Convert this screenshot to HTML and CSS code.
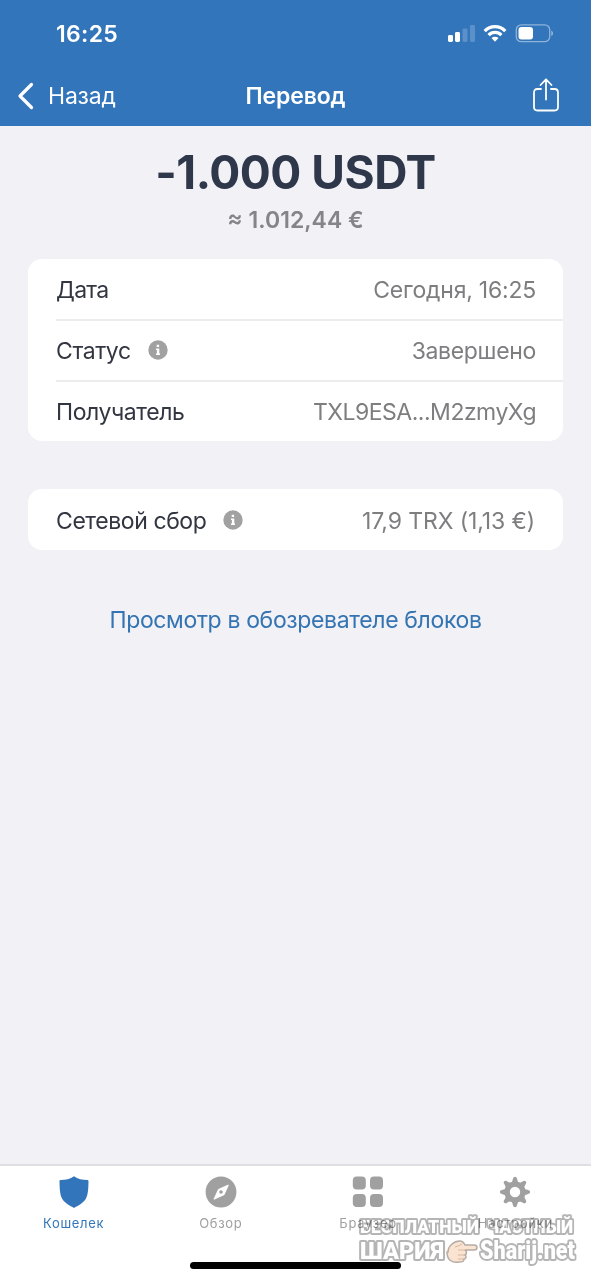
FILE: index.html
```html
<!DOCTYPE html>
<html lang="ru">
<head>
<meta charset="utf-8">
<title>Перевод</title>
<link rel="stylesheet" href="styles.css">
</head>
<body>
<div class="screen">
  <header class="header">
    <div class="status">
      <span class="time">16:25</span>
      <svg class="indicators" width="108" height="24" viewBox="0 0 108 24" fill="#fff">
        <rect x="1" y="13" width="5" height="7" rx="1.4"/>
        <rect x="8" y="10" width="5" height="10" rx="1.4"/>
        <rect x="15.500" y="6.500" width="5" height="13.500" rx="1.400" opacity=".2"/>
        <rect x="23" y="3" width="5" height="17" rx="1.400" opacity=".2"/>
        <g fill="none" stroke="#fff" stroke-width="3.200">
          <path d="M37.700 9.100a14 14 0 0 1 20.600 0"/>
          <path d="M41.600 13.200a8.700 8.700 0 0 1 12.800 0"/>
        </g>
        <path d="M48 19.700l-3.500-3.600a5 5 0 0 1 7 0z"/>
        <rect x="69.300" y="2.800" width="33.400" height="16.900" rx="5" fill="none" stroke="#fff" stroke-opacity=".45" stroke-width="1.300"/>
        <rect x="71.500" y="5" width="14.500" height="12.600" rx="3"/>
        <path d="M104.300 8.500c2.200 1 2.200 4.600 0 5.600z" opacity=".5"/>
      </svg>
    </div>
    <nav class="navbar">
      <div class="back">
        <svg width="18" height="28" viewBox="0 0 18 28" fill="none" stroke="#fff" stroke-width="3.200" stroke-linecap="round" stroke-linejoin="round"><path d="M14.500 2.500L3 14l11.500 11.500"/></svg>
        <span class="back-label">Назад</span>
      </div>
      <h1 class="title">Перевод</h1>
      <svg class="share" width="28" height="36" viewBox="0 0 28 36" fill="none" stroke="#fff" stroke-width="1.800" stroke-linecap="round" stroke-linejoin="round"><path d="M9 12H5.500Q2 12 2 15.500V30q0 3.500 3.500 3.500h17q3.500 0 3.500-3.500V15.500Q26 12 22.500 12H19M14 22.500V2.500M8.500 8L14 2.300 19.500 8"/></svg>
    </nav>
  </header>

  <main class="content">
    <div class="amount">-1.000 USDT</div>
    <div class="fiat">≈ 1.012,44 €</div>
    <section class="card">
      <div class="row"><span class="label date">Дата</span><span class="value today">Сегодня, 16:25</span></div>
      <div class="row"><span class="label state">Статус</span>
        <svg class="info" width="20" height="20" viewBox="0 0 20 20"><circle cx="10" cy="10" r="9.700" fill="#a1a1a1"/><path d="M8.700 4.800h2.400V7H8.700zM8 8.500h3.300v5H12V15H8v-1.500h.9V10H8z" fill="#fff"/></svg>
        <span class="value done">Завершено</span></div>
      <div class="row"><span class="label recipient">Получатель</span><span class="value address">TXL9ESA...M2zmyXg</span></div>
    </section>
    <section class="card fee-card">
      <div class="row"><span class="label fee">Сетевой сбор</span>
        <svg class="info" width="20" height="20" viewBox="0 0 20 20"><circle cx="10" cy="10" r="9.700" fill="#a1a1a1"/><path d="M8.700 4.800h2.400V7H8.700zM8 8.500h3.300v5H12V15H8v-1.500h.9V10H8z" fill="#fff"/></svg>
        <span class="value cost">17,9 TRX (1,13 €)</span></div>
    </section>
    <a class="explorer">Просмотр в обозревателе блоков</a>
  </main>

  <footer class="tabbar">
    <svg class="watermark" width="231" height="64" viewBox="0 0 231 64">
      <g class="mark">
        <text x="10" y="24" font-size="19" textLength="119" lengthAdjust="spacingAndGlyphs">БЕСПЛАТНЫЙ</text>
        <text x="137" y="24" font-size="19" textLength="86" lengthAdjust="spacingAndGlyphs">ЧАСТНЫЙ</text>
        <text x="10" y="50" font-size="23" textLength="84" lengthAdjust="spacingAndGlyphs">ШАРИЯ</text>
        <text x="130" y="50" font-size="25" textLength="95" lengthAdjust="spacingAndGlyphs">Sharij.net</text>
      </g>
      <path d="M98 43c0-6 6-11 12-11 3 0 4 2 5 4h9c4 0 4 5 0 5h-9c2 1 2 4 0 5 2 1 1 4-1 4 0 3-2 3-5 3-6 1-12-1-12-10z" fill="#fae3d0" stroke="#b6aca5" stroke-width="1.500"/>
      <path d="M115 41h-7m7 5h-7m5 4h-5M105 38q4-1 7-3" fill="none" stroke="#d4b8a3"/>
    </svg>
    <div class="tab active">
      <svg width="32" height="34" viewBox="0 0 32 34" fill="currentColor"><path d="M16 1.200c3.600 2.600 8.500 3.800 13.300 3.900 1 0 1.200.6 1.200 1.500-.2 7.500-.3 13-2.800 17.400C25.200 28.200 20 30.600 16 33c-4-2.400-9.200-4.800-11.700-9C1.800 19.600 1.700 14.100 1.500 6.600c0-.9.200-1.500 1.200-1.500C7.500 5 12.400 3.800 16 1.200z"/></svg>
      <span class="tab-label">Кошелек</span>
    </div>
    <div class="tab">
      <svg width="32" height="34" viewBox="0 0 32 34"><circle cx="16" cy="17" r="15.400" fill="currentColor"/><path d="M22.800 9.800c.7-.3 1.100.1.800.9l-4 8.700c-.3.600-.6.900-1.200 1.200l-8.900 4c-.7.300-1.100-.1-.8-.8l4-8.900c.3-.6.600-.9 1.200-1.200z" fill="#fff"/><circle cx="16" cy="17" r="1.800" fill="currentColor"/></svg>
      <span class="tab-label">Обзор</span>
    </div>
    <div class="tab">
      <svg width="32" height="34" viewBox="0 0 32 34" fill="currentColor"><rect x=".8" y="1.500" width="13" height="13" rx="4"/><rect x="18" y="1.500" width="13" height="13" rx="4"/><rect x=".8" y="19" width="13" height="13" rx="4"/><rect x="18" y="19" width="13" height="13" rx="4"/></svg>
      <span class="tab-label">Браузер</span>
    </div>
    <div class="tab">
      <svg width="32" height="34" viewBox="0 0 32 34" fill="currentColor">
        <defs><path id="tooth" d="M11.500 8.500q2-1.500 2.500-4.700.3-2 2-2t2 2q.5 3.200 2.500 4.700z"/></defs>
        <use href="#tooth"/><use href="#tooth" transform="rotate(45 16 17)"/><use href="#tooth" transform="rotate(90 16 17)"/><use href="#tooth" transform="rotate(135 16 17)"/><use href="#tooth" transform="rotate(180 16 17)"/><use href="#tooth" transform="rotate(225 16 17)"/><use href="#tooth" transform="rotate(270 16 17)"/><use href="#tooth" transform="rotate(315 16 17)"/>
        <circle cx="16" cy="17" r="7.900" fill="none" stroke="currentColor" stroke-width="5.400"/>
      </svg>
      <span class="tab-label">Настройки</span>
    </div>
    <div class="home"></div>
  </footer>
</div>
</body>
</html>
```
FILE: styles.css
```css
* { box-sizing: border-box; }
body { margin: 0; font-family: Inter, "Noto Sans", sans-serif; }
.screen { width: 591px; height: 1280px; display: flex; flex-direction: column; background: #f1f1f6; overflow: hidden; }
.header { height: 126px; background: #3275bb; color: #fff; }
.status { height: 66px; display: flex; justify-content: space-between; align-items: center; padding: 2px 36px 0 56px; }
.time { font-size: 23px; font-weight: 600; letter-spacing: .3px; }
.indicators { margin-top: -1px; }
.navbar { height: 60px; display: grid; grid-template-columns: 1fr auto 1fr; align-items: center; padding: 0 17px; }
.back { display: flex; align-items: center; gap: 13px; }
.back-label { font-size: 23px; letter-spacing: -.2px; }
.title { margin: 0; font-size: 23px; font-weight: 600; letter-spacing: -.15px; }
.share { justify-self: end; margin: -2px 14px 0 0; }
.content { flex: 1; display: flex; flex-direction: column; padding: 18px 28px 0; }
.amount { height: 56px; line-height: 56px; text-align: center; font-size: 46px; font-weight: 700; letter-spacing: -.45px; color: #2f374b; }
.fiat { height: 40px; line-height: 40px; text-align: center; font-size: 23px; font-weight: 600; color: #858589; }
.card { margin-top: 19px; background: #fff; border-radius: 14px; padding-left: 28px; }
.row { height: 61px; display: flex; align-items: center; padding: 1px 27px 0 0; }
.card .row:first-child:not(:last-child) { height: 60px; padding-top: 2px; }
.row + .row { border-top: 2px solid #ececee; padding-top: 0; }
.fee-card { margin-top: 48px; }
.fee-card .row { padding-top: 2px; }
.label { font-size: 23px; color: #323641; letter-spacing: -.42px; }
.date { letter-spacing: -.7px; }
.value { margin-left: auto; font-size: 23px; color: #7e7e80; }
.today { letter-spacing: -.22px; }
.done { letter-spacing: -.33px; }
.address { letter-spacing: -.5px; }
.cost { letter-spacing: -.1px; margin-right: 1px; }
.info { margin: -2px 0 0 17px; }
.explorer { margin-top: 52px; line-height: 36px; text-align: center; font-size: 23px; letter-spacing: -.36px; color: #3574b2; white-space: nowrap; }
.tabbar { position: relative; height: 116px; display: flex; padding-right: 2px; background: #fff; border-top: 2px solid #dfdfe3; }
.tab { flex: 1; display: flex; flex-direction: column; align-items: center; padding-top: 9px; color: #a0a0a0; }
.tab-label { position: relative; margin-top: 5px; font-size: 13px; line-height: 18px; letter-spacing: .7px; mix-blend-mode: multiply; }
.active { color: #3275bb; }
.home { position: absolute; left: 190px; top: 96px; width: 211px; height: 7px; border-radius: 4px; background: #000; }
.watermark { position: absolute; left: 350px; top: 43px; overflow: visible; }
.mark { font-family: Roboto, "Open Sans", sans-serif; font-weight: 900; fill: #fff; stroke: #b5b5b5; stroke-width: 4px; stroke-linejoin: round; paint-order: stroke; }
```
